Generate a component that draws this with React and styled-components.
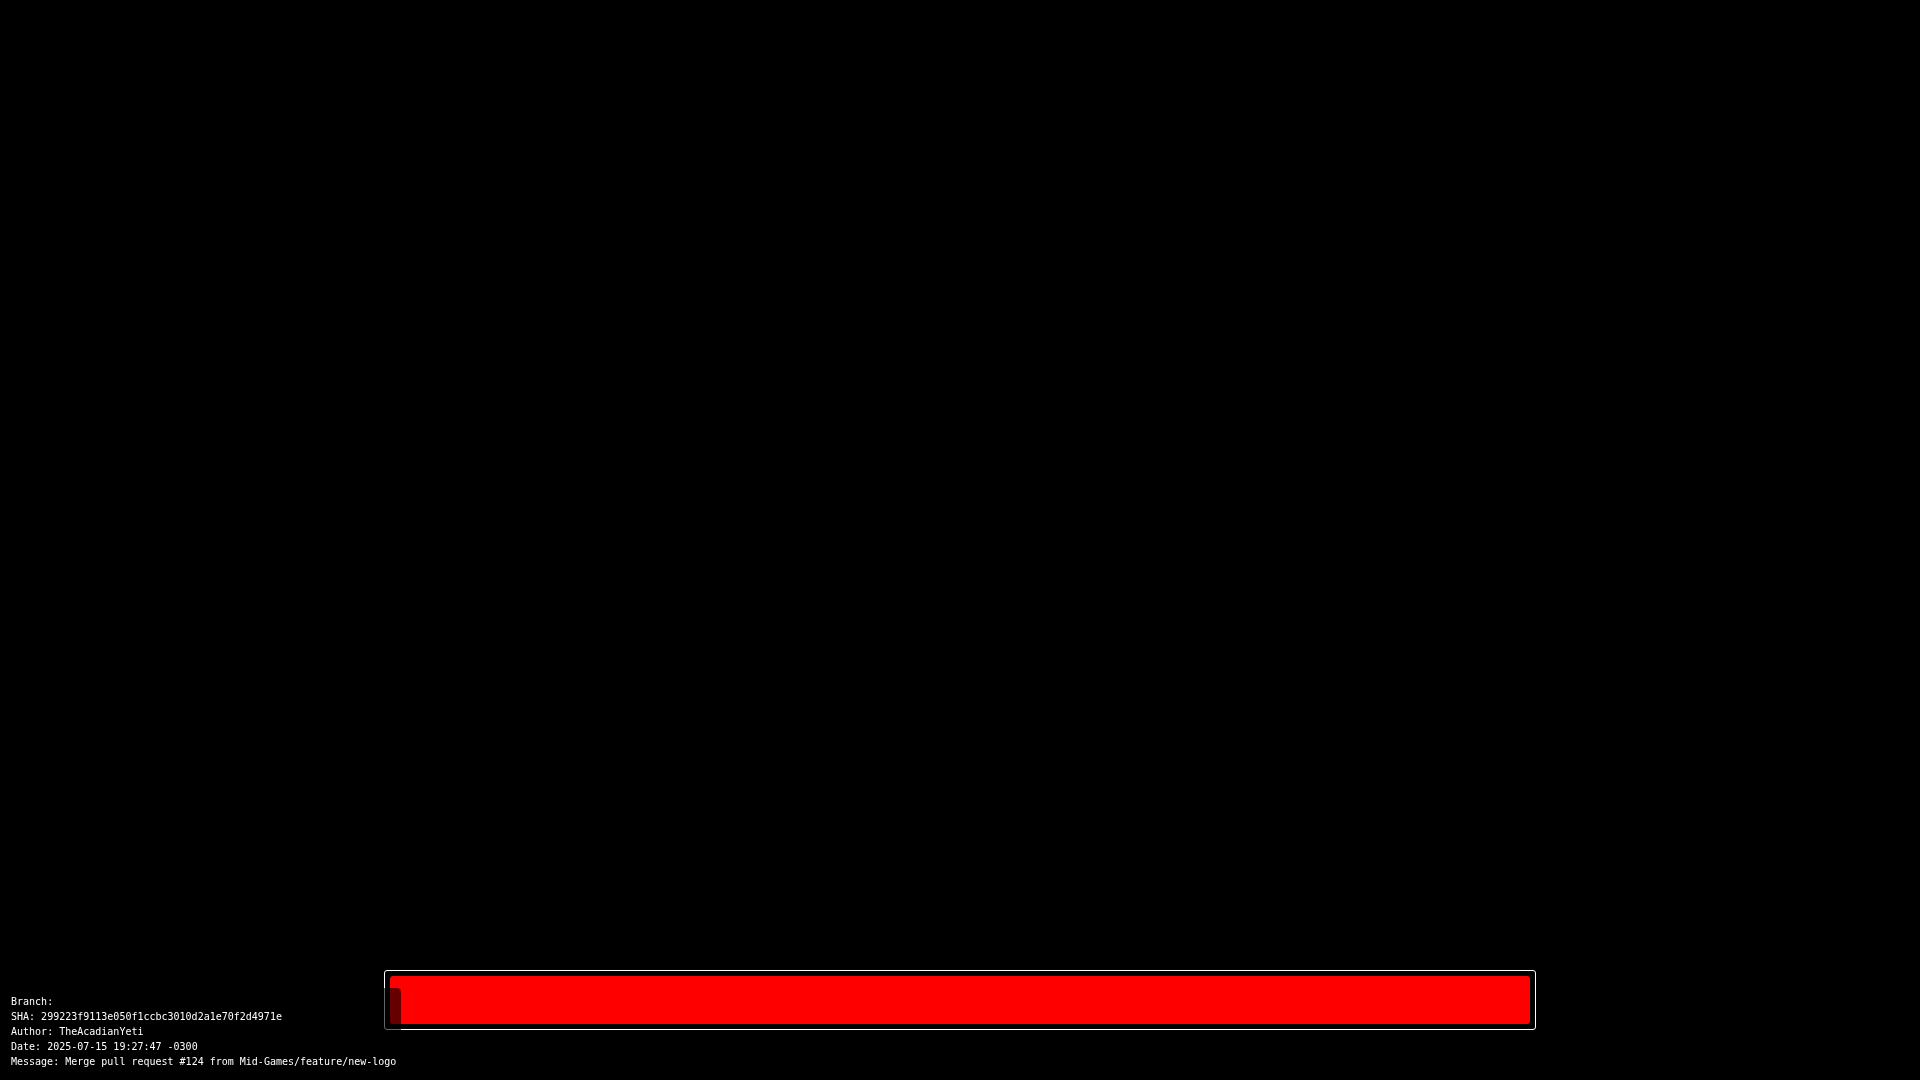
import React from 'react'
import styled, { createGlobalStyle } from 'styled-components';

const commit = [
    { label: "Branch", value: "" },
    { label: "SHA", value: "299223f9113e050f1ccbc3010d2a1e70f2d4971e" },
    { label: "Author", value: "TheAcadianYeti" },
    { label: "Date", value: "2025-07-15 19:27:47 -0300" },
    { label: "Message", value: "Merge pull request #124 from Mid-Games/feature/new-logo" },
];

const LoadingBar = ({ progress }) => {
    return (
        <BarFrame role="progressbar" aria-label="Loading" aria-valuenow={progress}>
            <BarFill style={{ width: `${progress}%` }} />
        </BarFrame>
    );
};

const App = () => {
    return (
        <>
            <GlobalStyle />
            <Screen>
                <LoadingBar progress={100} />
            </Screen>
            <BuildInfo>
                {commit.map(({ label, value }) => (
                    <InfoLine key={label}>{label}: {value}</InfoLine>
                ))}
            </BuildInfo>
        </>
    );
};

const GlobalStyle = createGlobalStyle`
* {
  box-sizing: border-box;
}

body {
  margin: 0;
  background: #000;
}
`;

const Screen = styled.main`
  display: flex;
  flex-direction: column;
  justify-content: flex-end;
  align-items: center;
  min-height: 100vh;
  padding-bottom: 50px;
`;

const BarFrame = styled.div`
  width: 60%;
  height: 60px;
  padding: 5px;
  border: 1px solid #fff;
  border-radius: 3px;
`;

const BarFill = styled.div`
  height: 100%;
  background: #f00;
  border-radius: 3px;
`;

/* sits over the corner of the loading bar */
const BuildInfo = styled.div`
  position: fixed;
  left: 5px;
  bottom: 5px;
  padding: 6px 5px 6px 6px;
  border-radius: 4px;
  background: rgba(0, 0, 0, 0.6);
  color: #fff;
  font-family: "DejaVu Sans Mono", monospace;
  font-size: 10px;
  line-height: 15px;
`;

const InfoLine = styled.div`
  white-space: nowrap;
`;

export default App
